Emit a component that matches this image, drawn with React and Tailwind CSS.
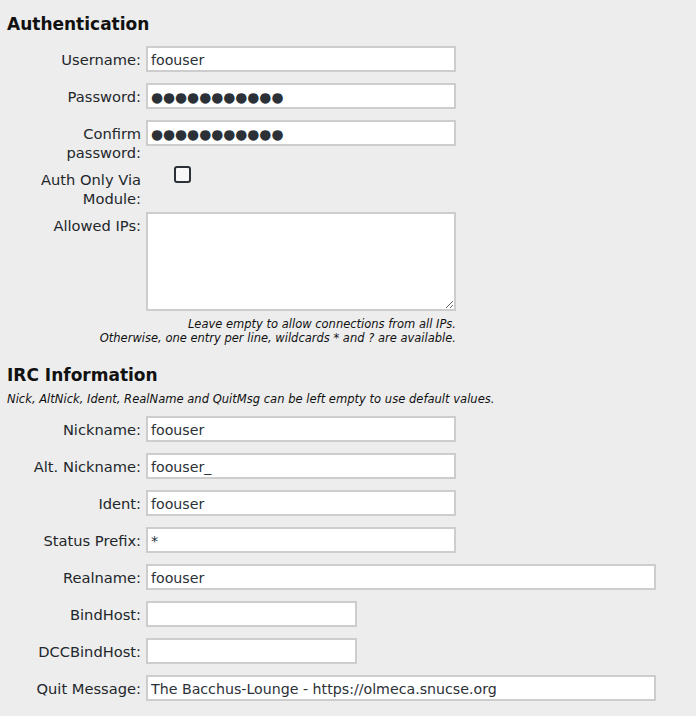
import React from "react";

const labelCls =
  "w-[134px] shrink-0 text-right pt-[4px] text-[14.67px] leading-[19px] text-[#23272b]";
const inputCls =
  "h-[26px] border-2 border-[#cdcdcd] bg-white px-[3px] pt-[1px] text-[#2b3137] outline-none";

const Row = ({ label, children, className = "" }) => (
  <div className={`flex items-start gap-[5px] ${className}`}>
    <label className={labelCls}>{label}</label>
    {children}
  </div>
);

const TextRow = ({
  label,
  value = "",
  width = "w-[310px]",
  size = "text-[14.2px]",
  className = "mt-[11px]",
}) => (
  <Row label={label} className={className}>
    <input type="text" defaultValue={value} className={`${inputCls} ${size} ${width}`} />
  </Row>
);

const dots = "●●●●●●●●●●●";

export default function App() {
  return (
    <div
      className="min-h-screen bg-[#ededed] pl-[7px] pt-[14px] pb-[15px]"
      style={{ fontFamily: '"DejaVu Sans", sans-serif' }}
    >
      {/* Authentication */}
      <h2 className="text-[17px] font-bold leading-[20px] text-[#111]">Authentication</h2>

      <TextRow label="Username:" value="foouser" className="mt-[12px]" />
      <TextRow label="Password:" value={dots} size="text-[13.8px]" />
      <TextRow label="Confirm password:" value={dots} size="text-[13.8px]" />

      <Row label="Auth Only Via Module:" className="mt-[4px]">
        <input
          type="checkbox"
          className="ml-[28px] mt-0 h-[17px] w-[17px] appearance-none rounded-[3px] border-2 border-[#2b3137] bg-[#f8f8f8]"
        />
      </Row>

      <Row label="Allowed IPs:" className="mt-[4px]">
        <textarea className="h-[99px] w-[310px] border-2 border-[#cdcdcd] bg-white px-[3px] text-[14.2px] outline-none" />
      </Row>

      <div className="mt-[6px] w-[449px] text-right text-[11.5px] italic leading-[14px] text-[#111]">
        <div>Leave empty to allow connections from all IPs.</div>
        <div>Otherwise, one entry per line, wildcards * and ? are available.</div>
      </div>

      {/* IRC Information */}
      <h2 className="mt-[20px] text-[17px] font-bold leading-[20px] text-[#111]">IRC Information</h2>
      <div className="mt-[7px] text-[11.55px] italic leading-[14px] text-[#111]">
        Nick, AltNick, Ident, RealName and QuitMsg can be left empty to use default values.
      </div>

      <TextRow label="Nickname:" value="foouser" className="mt-[10px]" />
      <TextRow label="Alt. Nickname:" value="foouser_" />
      <TextRow label="Ident:" value="foouser" />
      <TextRow label="Status Prefix:" value="*" />
      <TextRow label="Realname:" value="foouser" width="w-[510px]" />
      <TextRow label="BindHost:" width="w-[211px]" />
      <TextRow label="DCCBindHost:" width="w-[211px]" />
      <TextRow
        label="Quit Message:"
        value="The Bacchus-Lounge - https://olmeca.snucse.org"
        width="w-[510px]"
      />
    </div>
  );
}
